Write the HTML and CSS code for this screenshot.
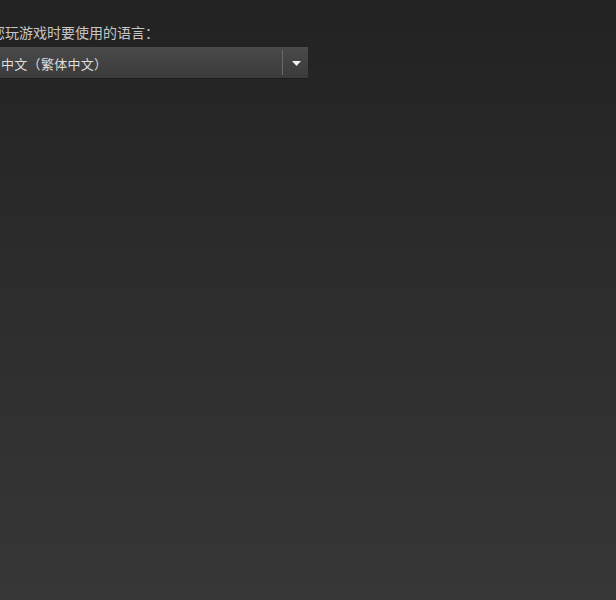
FILE: index.html
```html
<!DOCTYPE html>
<html lang="zh-CN">
<head>
<meta charset="utf-8">
<title>语言</title>
<link rel="stylesheet" href="styles.css">
</head>
<body>
  <div class="settings">
    <div class="field">
      <label class="field-label">您玩游戏时要使用的语言<span class="colon">：</span></label>
      <div class="dropdown">
        <span class="dropdown-value">中文（繁体中文）</span>
        <span class="dropdown-toggle">
          <svg class="dropdown-arrow" width="9" height="5" viewBox="0 0 9 5"><path d="M0 0H9L4.5 5Z" fill="#f2f2f2"/></svg>
        </span>
      </div>
    </div>
  </div>
</body>
</html>
```

FILE: styles.css
```css
html, body {
  margin: 0;
  height: 100%;
}

body {
  background: linear-gradient(to bottom, #222222 0%, #2b2b2b 40%, #373737 100%);
  font-family: "Noto Sans CJK SC", "Noto Sans", sans-serif;
  font-size: 13px;
  color: #c8c8c8;
}

.settings {
  padding-top: 23px;
  margin-left: -7px;
}

.field {
  display: flex;
  flex-direction: column;
  gap: 6px;
  width: 315px;
}

.field-label {
  margin-left: -2px;
  font-size: 14px;
  line-height: 18px;
  color: #c6c6c6;
}

/* full-width colon drawn centred in its cell */
.colon {
  font-family: "Noto Sans CJK TC", "Noto Sans CJK SC", sans-serif;
}

.dropdown {
  display: flex;
  align-items: stretch;
  height: 31px;
  background: linear-gradient(to bottom, #4a4a4a 0%, #424242 50%, #3b3b3b 100%);
  box-shadow: 0 1px 0 rgba(0, 0, 0, 0.25);
}

.dropdown-value {
  flex: 1;
  display: flex;
  align-items: center;
  padding-left: 8px;
  padding-top: 2px;
  color: #dedede;
  line-height: 17px;
  letter-spacing: 0.3px;
}

.dropdown-toggle {
  width: 24px;
  display: flex;
  align-items: center;
  justify-content: center;
  border-left: 1px solid #6a6a6a;
  margin: 3px 0;
  padding-left: 1px;
}

.dropdown-arrow {
  display: block;
  margin-top: 1px;
}
```
